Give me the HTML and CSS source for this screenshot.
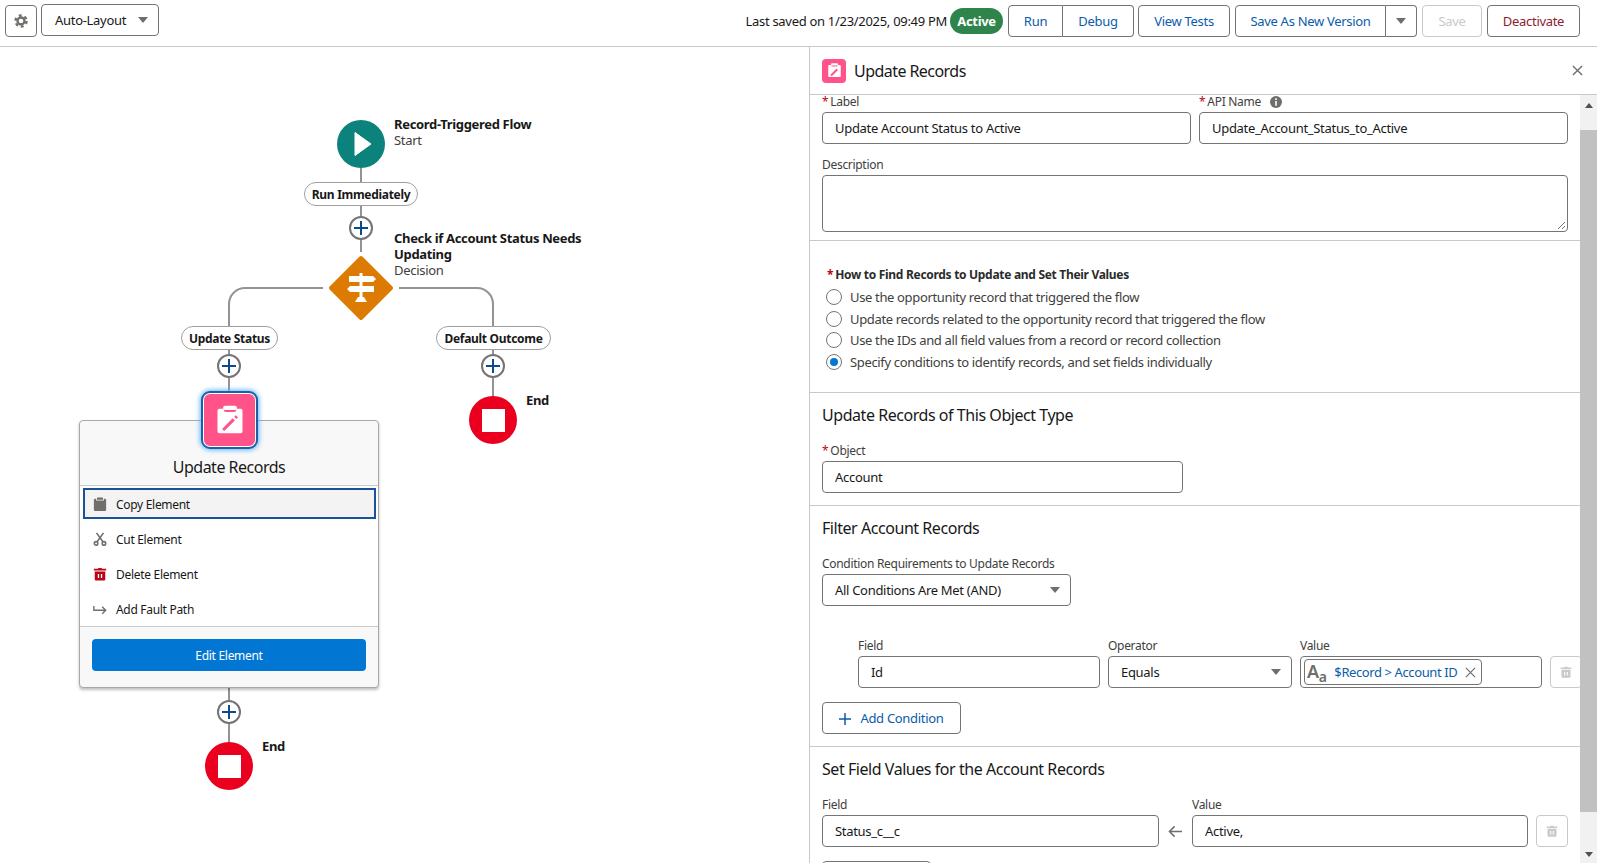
FILE: index.html
```html
<!DOCTYPE html>
<html lang="en">
<head>
  <meta charset="UTF-8">
  <meta name="viewport" content="width=device-width, initial-scale=1.0">
  <title>Flow Builder - Update Account Status</title>
  <link rel="stylesheet" href="styles.css">
</head>
<body>
  <header class="toolbar">
    <div class="toolbar-left">
      <button class="btn btn-gear" aria-label="Settings">
        <svg viewBox="0 0 24 24" width="14" height="14"><g fill="none" stroke="#706e6b"><circle cx="12" cy="12" r="9.550" stroke-width="4" stroke-dasharray="5 5"/><circle cx="12" cy="12" r="6" stroke-width="4"/></g></svg>
      </button>
      <div class="btn layout-select">
        <span>Auto-Layout</span>
        <span class="caret"></span>
      </div>
    </div>
    <div class="toolbar-right">
      <span class="saved">Last saved on 1/23/2025, 09:49 PM</span>
      <span class="badge">Active</span>
      <div class="btn-group">
        <button class="btn btn-run">Run</button>
        <button class="btn btn-debug">Debug</button>
      </div>
      <button class="btn btn-tests">View Tests</button>
      <div class="btn-group">
        <button class="btn btn-version">Save As New Version</button>
        <button class="btn btn-more" aria-label="More"><span class="caret"></span></button>
      </div>
      <button class="btn btn-save" disabled>Save</button>
      <button class="btn btn-deactivate">Deactivate</button>
    </div>
  </header>

  <main class="workspace">
    <section class="canvas">
      <div class="flow">
        <svg class="connectors" width="809" height="863" viewBox="0 0 809 863">
          <path d="M361 168V252"/>
          <path d="M323 288H245a16 16 0 0 0-16 16V394"/>
          <path d="M399 288H477a16 16 0 0 1 16 16V398"/>
          <path d="M229 687V744"/>
        </svg>

        <div class="node-circle node-start">
          <svg viewBox="0 0 48 48" width="48" height="48"><path fill="#fff" d="M18 12.500 34 24 18 35.500z" stroke="#fff" stroke-width="1" stroke-linejoin="round"/></svg>
        </div>
        <div class="node-label label-start"><strong>Record-Triggered Flow</strong><br>Start</div>

        <div class="pill pill-run">Run Immediately</div>
        <div class="add add-1"></div>

        <svg class="node-decision" viewBox="0 0 66 66" width="66" height="66">
          <path fill="#dd7a01" stroke="#dd7a01" stroke-width="4" stroke-linejoin="round" d="M33 3 63 33 33 63 3 33z"/>
          <path fill="#fff" d="M21 21h24l3 3-3 3H21zM22 31h24v6H22l-3-3zM31.500 18h3v3h-3zM31.500 27h3v4h-3zM31.500 37h3v5h-3zM27 47l3-5h6l3 5z"/>
        </svg>
        <div class="node-label label-decision"><strong>Check if Account Status Needs<br>Updating</strong><br>Decision</div>

        <div class="pill pill-status">Update Status</div>
        <div class="add add-2"></div>
        <div class="pill pill-default">Default Outcome</div>
        <div class="add add-3"></div>

        <div class="node-circle node-end end-right"><span class="stop"></span></div>
        <div class="node-label label-end-right"><strong>End</strong></div>

        <div class="element-card">
          <div class="card-title">Update Records</div>
          <ul class="card-menu">
            <li class="menu-item focused">
              <svg viewBox="0 0 16 16" width="14" height="16"><path fill="#706e6b" d="M5.500.5h5a1 1 0 0 1 1 1V3h-7V1.500a1 1 0 0 1 1-1zM2.500 2H3.500V4h9V2h1A1.500 1.500 0 0 1 15 3.500v11a1.500 1.500 0 0 1-1.500 1.500h-11A1.500 1.500 0 0 1 1 14.500v-11A1.500 1.500 0 0 1 2.500 2z"/></svg>
              Copy Element
            </li>
            <li class="menu-item">
              <svg viewBox="0 0 16 16" width="14" height="16"><g fill="none" stroke="#706e6b" stroke-width="1.800"><circle cx="3.500" cy="13" r="2"/><circle cx="12.500" cy="13" r="2"/><path d="M4.500 11.500 12 1M11.500 11.500 4 1"/></g></svg>
              Cut Element
            </li>
            <li class="menu-item">
              <svg viewBox="0 0 16 16" width="14" height="16"><path fill="#ba0517" d="M6 1h4v1h5v2H1V2h5zM2 5h12v9a1.500 1.500 0 0 1-1.500 1.500h-9A1.500 1.500 0 0 1 2 14zm3.500 3v4.500h1.500V8zm3.500 0v4.500h1.500V8z"/></svg>
              Delete Element
            </li>
            <li class="menu-item">
              <svg viewBox="0 0 16 16" width="14" height="16"><path fill="none" stroke="#706e6b" stroke-width="1.600" d="M1 4.500V9.500H14.500M10.500 5.500 14.500 9.500l-4 4"/></svg>
              Add Fault Path
            </li>
          </ul>
          <div class="card-footer">
            <button class="btn-edit">Edit Element</button>
          </div>
        </div>

        <div class="element-icon">
          <svg viewBox="0 0 48 48" width="30" height="30"><path fill="#fff" d="M7 6h7v1a4 4 0 0 0 4 4h12a4 4 0 0 0 4-4V6h7a3 3 0 0 1 3 3v33a3 3 0 0 1-3 3H7a3 3 0 0 1-3-3V9a3 3 0 0 1 3-3z"/><rect x="13" y="1" width="22" height="7" rx="3" fill="#fff"/><path fill="none" stroke="#ff538a" stroke-width="5" d="M13 40 30 23M32.500 20.500l2.500-2.500"/></svg>
        </div>

        <div class="add add-4"></div>
        <div class="node-circle node-end end-left"><span class="stop"></span></div>
        <div class="node-label label-end-left"><strong>End</strong></div>
      </div>
    </section>

    <aside class="panel">
      <div class="panel-header">
        <span class="panel-icon">
          <svg viewBox="0 0 48 48" width="15" height="15"><path fill="#fff" d="M7 6h7v1a4 4 0 0 0 4 4h12a4 4 0 0 0 4-4V6h7a3 3 0 0 1 3 3v33a3 3 0 0 1-3 3H7a3 3 0 0 1-3-3V9a3 3 0 0 1 3-3z"/><rect x="13" y="1" width="22" height="7" rx="3" fill="#fff"/><path fill="none" stroke="#ff538a" stroke-width="6" d="M13 40 33 20"/></svg>
        </span>
        <h2>Update Records</h2>
        <svg class="panel-close" viewBox="0 0 12 12" width="11" height="11"><path stroke="#706e6b" stroke-width="1.500" d="M1 1l10 10M11 1 1 11"/></svg>
      </div>

      <div class="panel-body">
        <div class="form">
          <div class="section section-basic">
            <div class="row-two">
              <div class="field">
                <label><span class="req">*</span>Label</label>
                <div class="input">Update Account Status to Active</div>
              </div>
              <div class="field">
                <label><span class="req">*</span>API Name <svg class="info" viewBox="0 0 12 12" width="12" height="12"><circle cx="6" cy="6" r="6" fill="#706e6b"/><path fill="#fff" d="M5.200 2.300h1.600v1.600H5.200zM5.200 5h1.600v4.700H5.200z"/></svg></label>
                <div class="input">Update_Account_Status_to_Active</div>
              </div>
            </div>
            <div class="field field-desc">
              <label>Description</label>
              <div class="input textarea">
                <svg class="grip" viewBox="0 0 10 10" width="10" height="10"><path stroke="#777" d="M9 2 2 9M9 6 6 9"/></svg>
              </div>
            </div>
          </div>

          <div class="section section-how">
            <div class="how-title"><span class="req">*</span>How to Find Records to Update and Set Their Values</div>
            <ul class="radios">
              <li><span class="radio"></span>Use the opportunity record that triggered the flow</li>
              <li><span class="radio"></span>Update records related to the opportunity record that triggered the flow</li>
              <li><span class="radio"></span>Use the IDs and all field values from a record or record collection</li>
              <li><span class="radio checked"></span>Specify conditions to identify records, and set fields individually</li>
            </ul>
          </div>

          <div class="section section-object">
            <h3>Update Records of This Object Type</h3>
            <div class="field field-object">
              <label><span class="req">*</span>Object</label>
              <div class="input">Account</div>
            </div>
          </div>

          <div class="section section-filter">
            <h3>Filter Account Records</h3>
            <div class="field field-req">
              <label>Condition Requirements to Update Records</label>
              <div class="input select">All Conditions Are Met (AND)<span class="caret"></span></div>
            </div>
            <div class="condition-row">
              <div class="field">
                <label>Field</label>
                <div class="input">Id</div>
              </div>
              <div class="field">
                <label>Operator</label>
                <div class="input select">Equals<span class="caret"></span></div>
              </div>
              <div class="field">
                <label>Value</label>
                <div class="input input-pill">
                  <span class="value-pill">
                    <span class="type-icon">A<small>a</small></span>
                    <span class="pill-text">$Record &gt; Account ID</span>
                    <svg viewBox="0 0 12 12" width="11" height="11"><path stroke="#706e6b" stroke-width="1.300" d="M1 1l10 10M11 1 1 11"/></svg>
                  </span>
                </div>
              </div>
              <button class="btn-trash" aria-label="Delete">
                <svg viewBox="0 0 16 16" width="12" height="14"><path fill="#c9c9c9" d="M6 1h4v1h5v2H1V2h5zM2 5h12v9a1.500 1.500 0 0 1-1.500 1.500h-9A1.500 1.500 0 0 1 2 14zm3.500 3v4.500h1.500V8zm3.500 0v4.500h1.500V8z"/></svg>
              </button>
            </div>
            <button class="btn btn-add">
              <svg viewBox="0 0 12 12" width="12" height="12"><path stroke="#0b5cab" stroke-width="1.500" d="M6 0v12M0 6h12"/></svg>
              Add Condition
            </button>
          </div>

          <div class="section section-set">
            <h3>Set Field Values for the Account Records</h3>
            <div class="set-row">
              <div class="field">
                <label>Field</label>
                <div class="input">Status_c__c</div>
              </div>
              <svg class="arrow-left" viewBox="0 0 16 14" width="15" height="13"><path fill="none" stroke="#706e6b" stroke-width="1.600" d="M15 7H2M7 1.500 1.500 7 7 12.500"/></svg>
              <div class="field">
                <label>Value</label>
                <div class="input">Active,</div>
              </div>
              <button class="btn-trash" aria-label="Delete">
                <svg viewBox="0 0 16 16" width="12" height="14"><path fill="#c9c9c9" d="M6 1h4v1h5v2H1V2h5zM2 5h12v9a1.500 1.500 0 0 1-1.500 1.500h-9A1.500 1.500 0 0 1 2 14zm3.500 3v4.500h1.500V8zm3.500 0v4.500h1.500V8z"/></svg>
              </button>
            </div>
            <button class="btn btn-add btn-next"></button>
          </div>
        </div>

        <div class="scrollbar">
          <span class="scroll-up"></span>
          <span class="scroll-thumb"></span>
          <span class="scroll-down"></span>
        </div>
      </div>
    </aside>
  </main>
</body>
</html>
```

FILE: styles.css
```css
* {
  box-sizing: border-box;
}

body {
  font-family: "Noto Sans", Arial, sans-serif;
  font-size: 13px;
  letter-spacing: -0.3px;
  margin: 0;
  height: 100vh;
  overflow: hidden;
  background-color: white;
  color: #181818;
  display: flex;
  flex-direction: column;
}

button {
  font: inherit;
  letter-spacing: inherit;
}

/* toolbar */
.toolbar {
  height: 47px;
  flex: none;
  border-bottom: 1px solid #c9c9c9;
  display: flex;
  justify-content: space-between;
  padding: 0 17px 0 5px;
}

.toolbar-left {
  display: flex;
  gap: 4px;
  align-items: flex-start;
  padding-top: 4px;
}

.toolbar-right {
  display: flex;
  align-items: center;
  gap: 5px;
  padding-bottom: 4px;
}

.btn {
  height: 32px;
  background: white;
  border: 1px solid #747474;
  border-radius: 4px;
  color: #0b5cab;
  padding: 0;
  cursor: pointer;
}

.btn-gear {
  width: 32px;
  display: flex;
  align-items: center;
  justify-content: center;
  margin-top: 1px;
}

.layout-select {
  width: 118px;
  color: #181818;
  display: flex;
  align-items: center;
  justify-content: space-between;
  padding: 0 10px 0 13px;
}

.caret {
  display: inline-block;
  width: 0;
  height: 0;
  border-left: 5px solid transparent;
  border-right: 5px solid transparent;
  border-top: 6px solid #706e6b;
}

.saved {
  margin-right: -2px;
}

.badge {
  width: 53px;
  height: 26px;
  border-radius: 13px;
  background-color: #2e844a;
  color: white;
  font-weight: 700;
  display: flex;
  align-items: center;
  justify-content: center;
}

.btn-group {
  display: flex;
}

.btn-group .btn:first-child {
  border-radius: 4px 0 0 4px;
}

.btn-group .btn:last-child {
  border-radius: 0 4px 4px 0;
  border-left: none;
}

.btn-run { width: 55px; }
.btn-debug { width: 71px; }
.btn-tests { width: 92px; margin-left: -1px; }
.btn-version { width: 151px; }
.btn-save { width: 60px; color: #c9c9c9; border-color: #c9c9c9; }
.btn-deactivate { width: 93px; color: #8e1b2e; }

.btn-more {
  width: 31px;
  display: flex;
  align-items: center;
  justify-content: center;
}

/* layout */
.workspace {
  flex: 1;
  display: flex;
  min-height: 0;
}

.canvas {
  width: 809px;
  flex: none;
  position: relative;
}

.flow {
  position: absolute;
  left: 0;
  top: -47px;
  width: 809px;
  height: 863px;
}

.connectors {
  position: absolute;
  left: 0;
  top: 0;
}

.connectors path {
  fill: none;
  stroke: #939393;
  stroke-width: 2;
}

/* flow nodes */
.node-circle {
  position: absolute;
  width: 48px;
  height: 48px;
  border-radius: 50%;
  display: flex;
  align-items: center;
  justify-content: center;
}

.node-start { left: 337px; top: 120px; background-color: #0b827c; }
.node-end { background-color: #ea001e; }
.end-right { left: 469px; top: 396px; }
.end-left { left: 205px; top: 742px; }

.stop {
  width: 23px;
  height: 23px;
  background: white;
}

.node-label {
  position: absolute;
  line-height: 16px;
  white-space: nowrap;
  color: #3e3e3c;
}

.node-label strong {
  color: #181818;
  letter-spacing: -0.33px;
}

.label-start { left: 394px; top: 116px; }
.label-decision { left: 394px; top: 230px; }
.label-end-right { left: 526px; top: 392px; }
.label-end-left { left: 262px; top: 738px; }

.pill {
  position: absolute;
  height: 24px;
  background: white;
  border: 1px solid #a0a0a0;
  border-radius: 12px;
  font-size: 12px;
  font-weight: 700;
  display: flex;
  align-items: center;
  justify-content: center;
  white-space: nowrap;
}

.pill-run { left: 304px; top: 182px; width: 114px; }
.pill-status { left: 181px; top: 326px; width: 97px; }
.pill-default { left: 436px; top: 326px; width: 115px; }

.add {
  position: absolute;
  width: 24px;
  height: 24px;
  border-radius: 50%;
  background: white;
  border: 2px solid #747474;
}

.add::before,
.add::after {
  content: "";
  position: absolute;
  background-color: #0b4a8c;
}

.add::before { left: 3px; top: 9px; width: 14px; height: 2px; }
.add::after { left: 9px; top: 3px; width: 2px; height: 14px; }

.add-1 { left: 349px; top: 216px; }
.add-2 { left: 217px; top: 354px; }
.add-3 { left: 481px; top: 354px; }
.add-4 { left: 217px; top: 700px; }

.node-decision {
  position: absolute;
  left: 328px;
  top: 255px;
}

.element-icon {
  position: absolute;
  left: 202px;
  top: 392px;
  width: 55px;
  height: 56px;
  background-color: #ff538a;
  border: 2px solid #fff;
  border-radius: 8px;
  outline: 2px solid #1b5fa8;
  outline-offset: -1px;
  box-shadow: 0 0 5px 2px #5fb4f5;
  display: flex;
  align-items: center;
  justify-content: center;
}

.element-card {
  position: absolute;
  left: 79px;
  top: 420px;
  width: 300px;
  height: 268px;
  background-color: #f8f8f8;
  border: 1px solid #a8a8a8;
  border-radius: 4px;
  box-shadow: 0 2px 3px rgba(0, 0, 0, 0.25);
}

.card-title {
  margin-top: 35px;
  height: 30px;
  border-bottom: 1px solid #c9c9c9;
  text-align: center;
  font-size: 16px;
  line-height: 22px;
  letter-spacing: -0.5px;
}

.card-menu {
  list-style: none;
  margin: 0;
  padding: 2px 2px 0 3px;
  height: 141px;
  background: white;
  border-bottom: 1px solid #c9c9c9;
  font-size: 12px;
}

.menu-item {
  height: 31px;
  margin-bottom: 4px;
  padding: 1px 0 0 10px;
  display: flex;
  align-items: center;
  gap: 9px;
}

.menu-item.focused {
  background-color: #f3f3f3;
  border: 2px solid #1b5297;
  padding-left: 8px;
}

.card-footer {
  padding: 12px 0 0 12px;
}

.btn-edit {
  width: 274px;
  height: 32px;
  border: none;
  border-radius: 4px;
  background-color: #0176d3;
  color: white;
  font-size: 12px;
}

/* panel */
.panel {
  flex: 1;
  min-width: 0;
  border-left: 1px solid #c9c9c9;
  display: flex;
  flex-direction: column;
}

.panel-header {
  height: 48px;
  flex: none;
  border-bottom: 1px solid #c9c9c9;
  display: flex;
  align-items: center;
  padding: 0 14px 0 12px;
  gap: 8px;
}

.panel-icon {
  width: 24px;
  height: 24px;
  background-color: #ff538a;
  border-radius: 4px;
  display: flex;
  align-items: center;
  justify-content: center;
}

.panel-header h2 {
  margin: 0;
  font-size: 16px;
  font-weight: 400;
  letter-spacing: -0.55px;
  flex: 1;
}

.panel-body {
  flex: 1;
  min-height: 0;
  display: flex;
}

.form {
  flex: 1;
  min-width: 0;
}

.scrollbar {
  width: 17px;
  flex: none;
  background-color: #f1f1f1;
  display: flex;
  flex-direction: column;
  align-items: center;
}

.scroll-up,
.scroll-down {
  flex: none;
  display: flex;
  align-items: center;
}

.scroll-up::before,
.scroll-down::before {
  content: "";
  border-left: 4px solid transparent;
  border-right: 4px solid transparent;
}

.scroll-up { height: 35px; }
.scroll-up::before { border-bottom: 5px solid #505050; margin-top: -15px; }
.scroll-down { height: 51px; align-items: flex-end; padding-bottom: 6px; }
.scroll-down::before { border-top: 5px solid #505050; }

.scroll-thumb {
  width: 100%;
  height: 682px;
  flex: none;
  background-color: #c1c1c1;
}

/* form */
.section {
  padding: 0 12px;
  border-bottom: 1px solid #c9c9c9;
}

.section h3 {
  margin: 0;
  font-size: 16px;
  font-weight: 400;
  line-height: 20px;
  letter-spacing: -0.45px;
}

.field label {
  display: block;
  font-size: 12px;
  line-height: 14px;
  height: 14px;
  color: #3e3e3c;
  margin-bottom: 3px;
  white-space: nowrap;
}

.req {
  color: #ba0517;
  margin-right: 2px;
}

.info {
  margin-left: 6px;
  vertical-align: -2px;
}

.input {
  height: 32px;
  background: white;
  border: 1px solid #747474;
  border-radius: 4px;
  padding: 0 12px;
  display: flex;
  align-items: center;
  white-space: nowrap;
}

.select {
  justify-content: space-between;
  padding-right: 10px;
}

.textarea {
  height: 57px;
  position: relative;
}

.grip {
  position: absolute;
  right: 1px;
  bottom: 1px;
}

.section-basic {
  height: 146px;
}

.row-two {
  display: grid;
  grid-template-columns: 369px 369px;
  gap: 8px;
}

.field-desc {
  margin-top: 14px;
}

.section-how {
  height: 152px;
  padding-top: 27px;
  padding-left: 17px;
}

.how-title {
  font-size: 12px;
  font-weight: 700;
  line-height: 14px;
  color: #2b2b2b;
}

.radios {
  list-style: none;
  margin: 4px 0 0 -1px;
  padding: 0;
  color: #3e3e3c;
  letter-spacing: -0.35px;
}

.radios li {
  height: 21.7px;
  display: flex;
  align-items: center;
}

.radio {
  width: 16px;
  height: 16px;
  border: 1px solid #747474;
  border-radius: 50%;
  margin-right: 8px;
  position: relative;
  flex: none;
}

.radio.checked::after {
  content: "";
  position: absolute;
  left: 3px;
  top: 3px;
  width: 8px;
  height: 8px;
  border-radius: 50%;
  background-color: #0176d3;
}

.section-object {
  height: 113px;
  padding-top: 12px;
}

.field-object {
  margin-top: 19px;
  width: 361px;
}

.section-filter {
  height: 241px;
  padding-top: 12px;
  overflow-x: clip;
}

.field-req {
  margin-top: 19px;
  width: 249px;
}

.condition-row {
  display: grid;
  grid-template-columns: 242px 184px 242px 32px;
  gap: 8px;
  margin-top: 33px;
  margin-left: 36px;
  margin-right: -40px;
  align-items: end;
}

.input-pill {
  padding: 0 0 0 3px;
}

.value-pill {
  height: 26px;
  width: 178px;
  border: 1px solid #747474;
  border-radius: 4px;
  display: flex;
  align-items: center;
  padding: 0 5px 0 2px;
  justify-content: space-between;
}

.type-icon {
  color: #706e6b;
  font-size: 18px;
  font-weight: 600;
  line-height: 18px;
}

.type-icon small {
  font-size: 14px;
  font-weight: 600;
  position: relative;
  top: 4px;
}

.pill-text {
  color: #0b5cab;
  letter-spacing: -0.4px;
}

.btn-trash {
  width: 32px;
  height: 32px;
  background: white;
  border: 1px solid #c9c9c9;
  border-radius: 4px;
  padding: 0;
  display: flex;
  align-items: center;
  justify-content: center;
}

.btn-add {
  width: 139px;
  margin-top: 14px;
  display: flex;
  align-items: center;
  justify-content: center;
  gap: 9px;
}

.btn-add svg {
  margin-top: 2px;
}

.section-set {
  padding-top: 12px;
  border-bottom: none;
}

.set-row {
  display: grid;
  grid-template-columns: 337px 33px 336px 32px;
  column-gap: 0;
  margin-top: 19px;
  align-items: end;
}

.set-row .btn-trash {
  margin-left: 8px;
}

.arrow-left {
  justify-self: center;
  margin-bottom: 9px;
}

.btn-next {
  width: 109px;
}
```
